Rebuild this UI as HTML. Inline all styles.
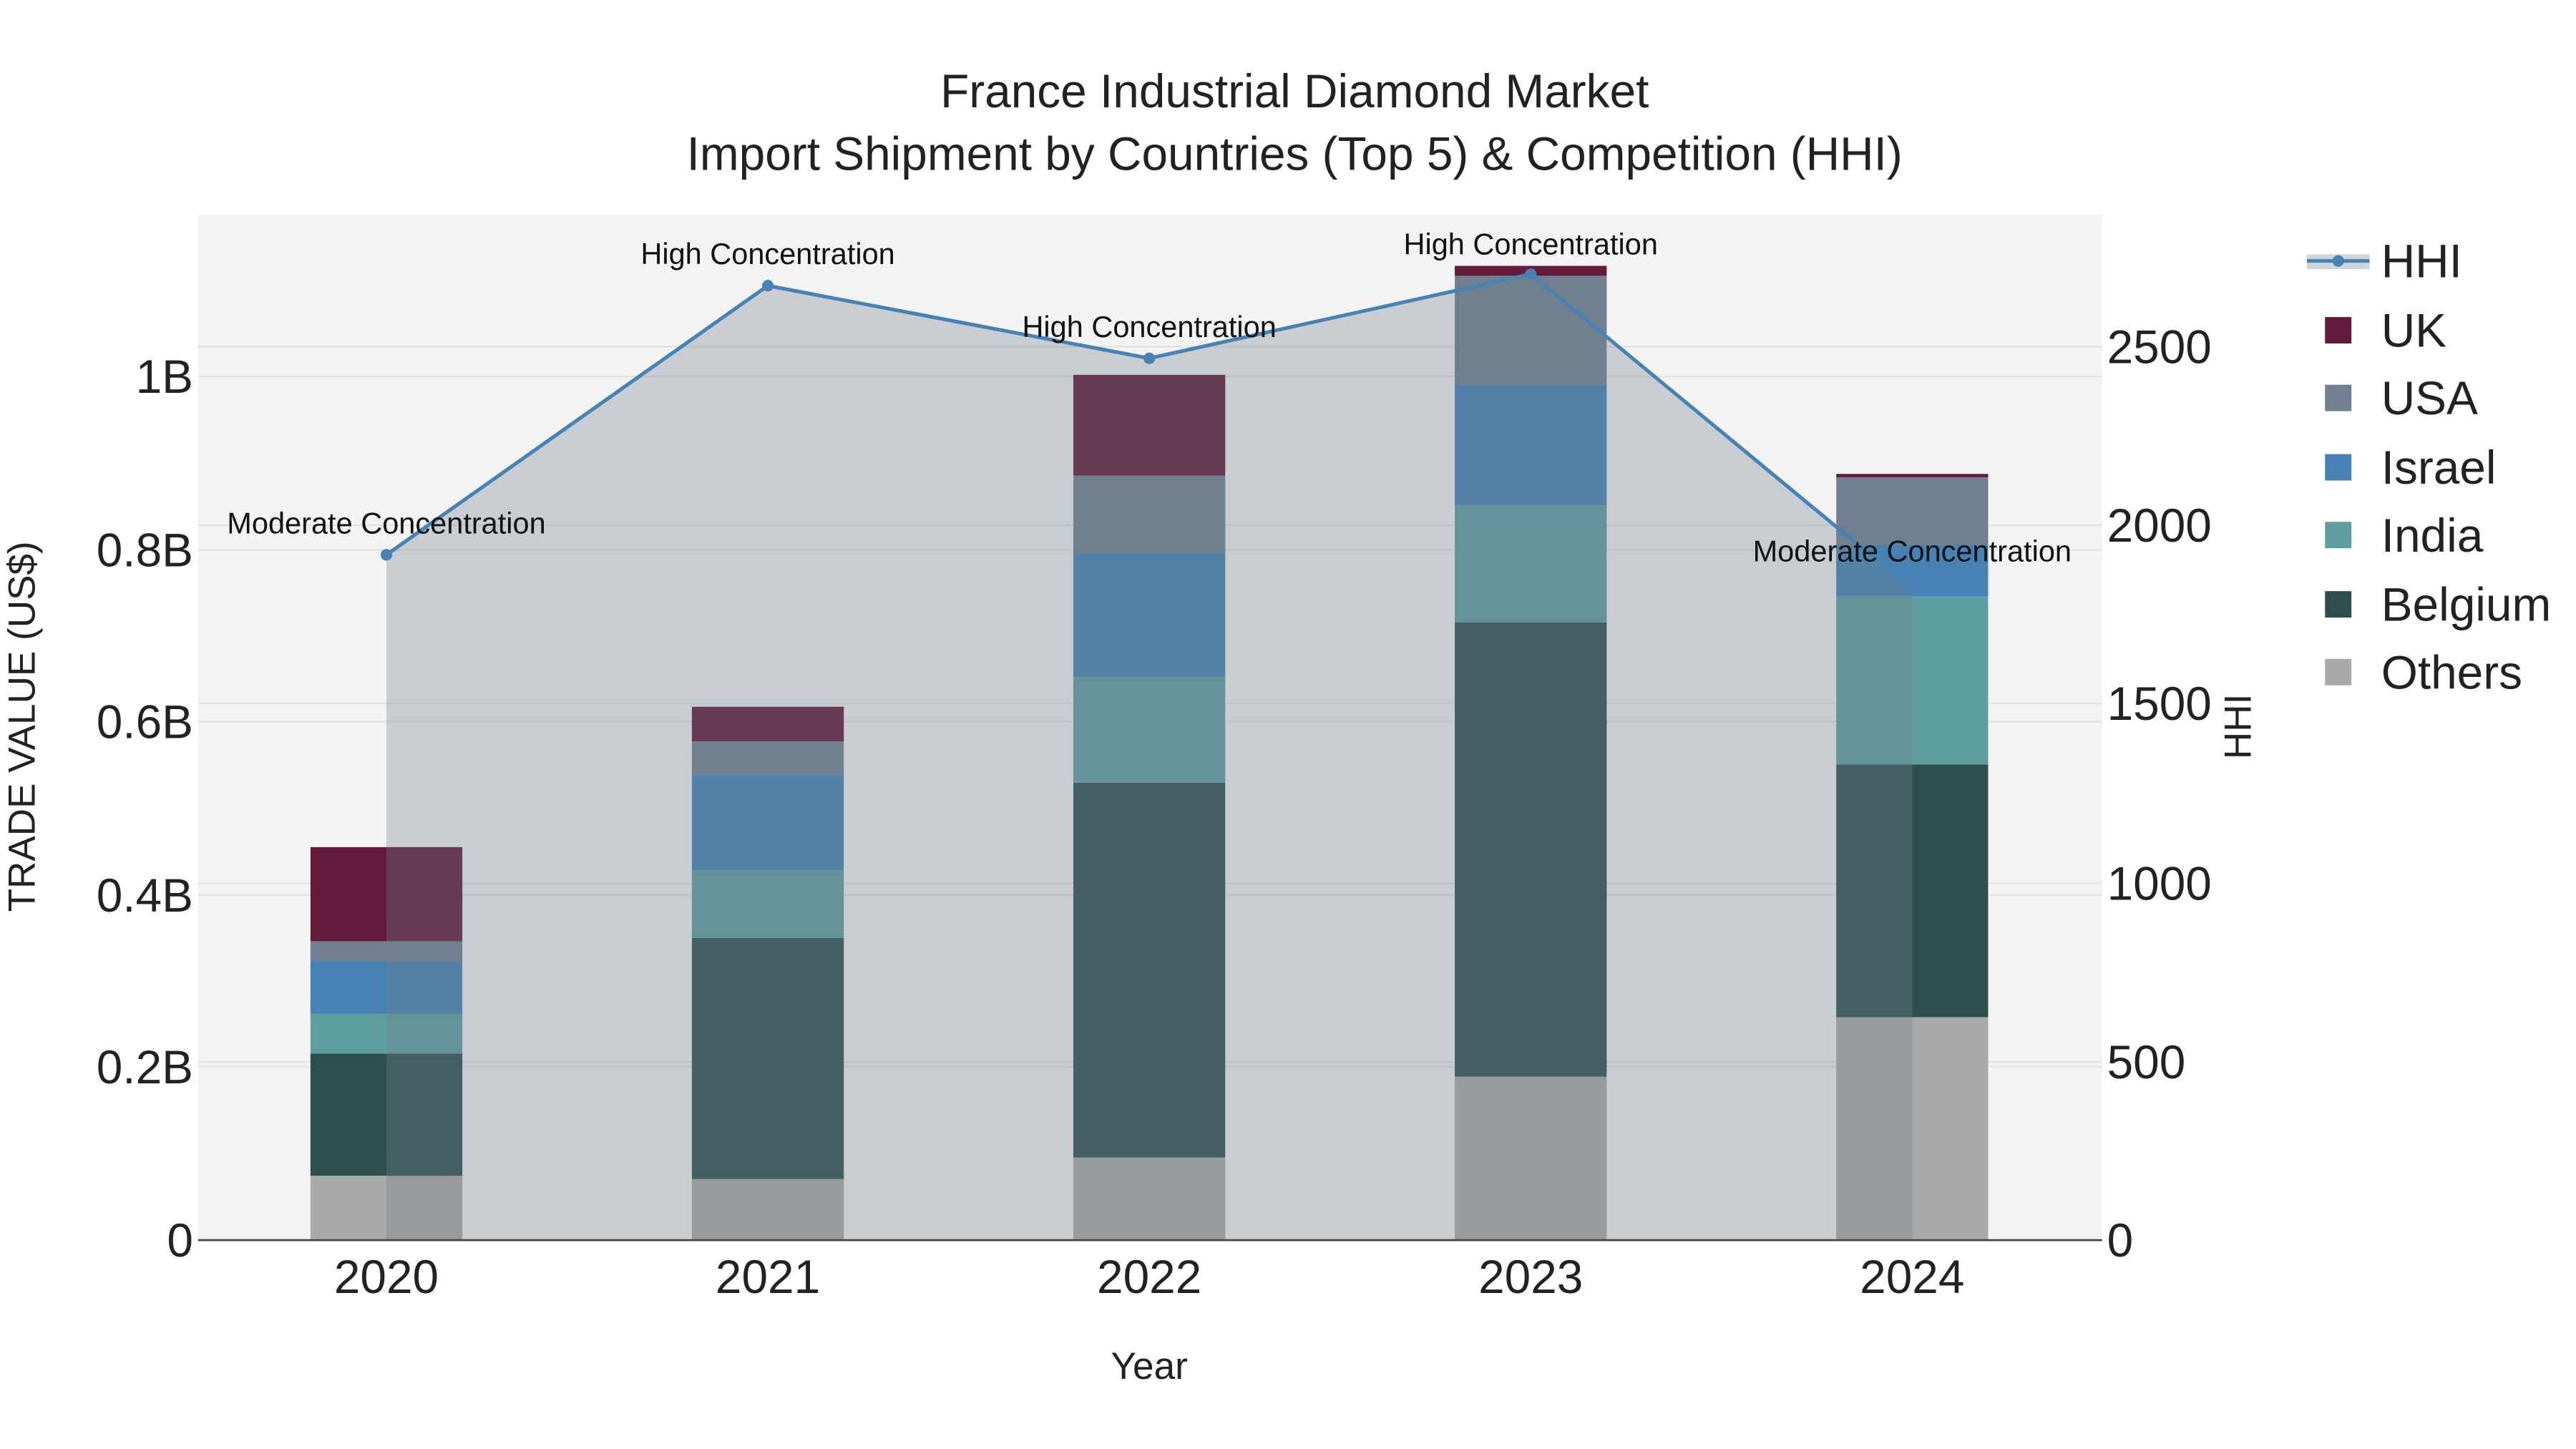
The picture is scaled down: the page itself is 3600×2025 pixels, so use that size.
<!DOCTYPE html>
<html><head><meta charset="utf-8"><style>html,body{margin:0;padding:0;background:#fff}svg{display:block}</style></head>
<body>
<svg width="3600" height="2025" viewBox="0 0 1560 877.5" xmlns="http://www.w3.org/2000/svg" font-family="Liberation Sans, sans-serif">
<rect width="1560" height="877.5" fill="#fff"/>
<rect x="120" y="130" width="1153" height="621" fill="#f3f3f3"/>
<g stroke="#e2e2e2" stroke-width="1">
<line x1="120" x2="1273" y1="646" y2="646"/><line x1="120" x2="1273" y1="542" y2="542"/><line x1="120" x2="1273" y1="437" y2="437"/><line x1="120" x2="1273" y1="333" y2="333"/><line x1="120" x2="1273" y1="228" y2="228"/>
<line x1="120" x2="1273" y1="643" y2="643"/><line x1="120" x2="1273" y1="535" y2="535"/><line x1="120" x2="1273" y1="426" y2="426"/><line x1="120" x2="1273" y1="318" y2="318"/><line x1="120" x2="1273" y1="210" y2="210"/>
</g>
<g>
<rect x="188" y="712" width="92" height="39" fill="#a9a9a9"/><rect x="188" y="638" width="92" height="74" fill="#2f4f4f"/><rect x="188" y="614" width="92" height="24" fill="#5f9ea0"/><rect x="188" y="582" width="92" height="32" fill="#4682b4"/><rect x="188" y="570" width="92" height="12" fill="#708090"/><rect x="188" y="513" width="92" height="57" fill="#641a3a"/>
<rect x="419" y="714" width="92" height="37" fill="#a9a9a9"/><rect x="419" y="568" width="92" height="146" fill="#2f4f4f"/><rect x="419" y="527" width="92" height="41" fill="#5f9ea0"/><rect x="419" y="469" width="92" height="58" fill="#4682b4"/><rect x="419" y="449" width="92" height="20" fill="#708090"/><rect x="419" y="428" width="92" height="21" fill="#641a3a"/>
<rect x="650" y="701" width="92" height="50" fill="#a9a9a9"/><rect x="650" y="474" width="92" height="227" fill="#2f4f4f"/><rect x="650" y="410" width="92" height="64" fill="#5f9ea0"/><rect x="650" y="335" width="92" height="75" fill="#4682b4"/><rect x="650" y="288" width="92" height="47" fill="#708090"/><rect x="650" y="227" width="92" height="61" fill="#641a3a"/>
<rect x="881" y="652" width="92" height="99" fill="#a9a9a9"/><rect x="881" y="377" width="92" height="275" fill="#2f4f4f"/><rect x="881" y="306" width="92" height="71" fill="#5f9ea0"/><rect x="881" y="233" width="92" height="73" fill="#4682b4"/><rect x="881" y="167" width="92" height="66" fill="#708090"/><rect x="881" y="161" width="92" height="6" fill="#641a3a"/>
<rect x="1112" y="616" width="92" height="135" fill="#a9a9a9"/><rect x="1112" y="463" width="92" height="153" fill="#2f4f4f"/><rect x="1112" y="361" width="92" height="102" fill="#5f9ea0"/><rect x="1112" y="330" width="92" height="31" fill="#4682b4"/><rect x="1112" y="289" width="92" height="41" fill="#708090"/><rect x="1112" y="287" width="92" height="2" fill="#641a3a"/>
</g>
<polygon points="234,751 234,336 465,173 696,217 927,166 1158,357 1158,751" fill="#708090" fill-opacity="0.33"/>
<polyline points="234,336 465,173 696,217 927,166 1158,357" fill="none" stroke="#4682b4" stroke-width="2.2"/>
<g fill="#4682b4"><circle cx="234" cy="336" r="3.5"/><circle cx="465" cy="173" r="3.5"/><circle cx="696" cy="217" r="3.5"/><circle cx="927" cy="166" r="3.5"/><circle cx="1158" cy="357" r="3.5"/></g>
<line x1="120" x2="1273" y1="751" y2="751" stroke="#444" stroke-width="1.2"/>
<g font-size="18" text-anchor="middle" fill="#111">
<text x="234" y="323">Moderate Concentration</text><text x="465" y="160">High Concentration</text><text x="696" y="204">High Concentration</text><text x="927" y="154">High Concentration</text><text x="1158" y="340">Moderate Concentration</text>
</g>
<g font-size="28.5" text-anchor="middle" fill="#222">
<text x="784" y="65">France Industrial Diamond Market</text>
<text x="784" y="103">Import Shipment by Countries (Top 5) &amp; Competition (HHI)</text>
</g>
<g font-size="28.5" text-anchor="end" fill="#222">
<text x="117" y="761">0</text><text x="117" y="656">0.2B</text><text x="117" y="552">0.4B</text><text x="117" y="447">0.6B</text><text x="117" y="343">0.8B</text><text x="117" y="238">1B</text>
</g>
<g font-size="28.5" text-anchor="start" fill="#222">
<text x="1276" y="761">0</text><text x="1276" y="653">500</text><text x="1276" y="545">1000</text><text x="1276" y="436">1500</text><text x="1276" y="328">2000</text><text x="1276" y="220">2500</text>
</g>
<g font-size="28.5" text-anchor="middle" fill="#222">
<text x="234" y="783">2020</text><text x="465" y="783">2021</text><text x="696" y="783">2022</text><text x="927" y="783">2023</text><text x="1158" y="783">2024</text>
</g>
<text x="696" y="835" font-size="23" text-anchor="middle" fill="#222">Year</text>
<text transform="translate(21,440) rotate(-90)" font-size="23" text-anchor="middle" fill="#222">TRADE VALUE (US$)</text>
<text transform="translate(1363,440) rotate(-90)" font-size="23" text-anchor="middle" fill="#222">HHI</text>
<rect x="1397" y="154" width="38" height="9" fill="#708090" fill-opacity="0.33"/>
<line x1="1397" x2="1435" y1="158" y2="158" stroke="#4682b4" stroke-width="2.2"/><circle cx="1416" cy="158" r="3.5" fill="#4682b4"/>
<g><rect x="1408" y="192" width="16" height="16" fill="#641a3a"/><rect x="1408" y="233" width="16" height="16" fill="#708090"/><rect x="1408" y="275" width="16" height="16" fill="#4682b4"/><rect x="1408" y="316" width="16" height="16" fill="#5f9ea0"/><rect x="1408" y="358" width="16" height="16" fill="#2f4f4f"/><rect x="1408" y="399" width="16" height="16" fill="#a9a9a9"/></g>
<g font-size="28.5" fill="#222">
<text x="1442" y="168">HHI</text><text x="1442" y="210">UK</text><text x="1442" y="251">USA</text><text x="1442" y="293">Israel</text><text x="1442" y="334">India</text><text x="1442" y="376">Belgium</text><text x="1442" y="417">Others</text>
</g>
</svg>
</body></html>
